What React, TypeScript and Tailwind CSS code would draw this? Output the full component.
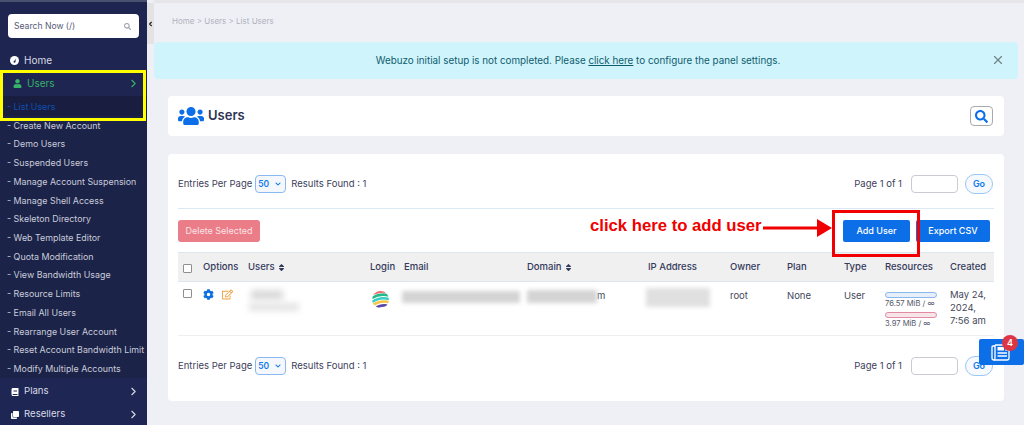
import { FaUsers, FaUser, FaCog, FaRegEdit, FaSearch, FaSort, FaClone, FaBook, FaChevronDown } from "react-icons/fa"
import { LuChevronRight, LuX, LuChevronLeft } from "react-icons/lu"

const subItems = [
  "Create New Account",
  "Demo Users",
  "Suspended Users",
  "Manage Account Suspension",
  "Manage Shell Access",
  "Skeleton Directory",
  "Web Template Editor",
  "Quota Modification",
  "View Bandwidth Usage",
  "Resource Limits",
  "Email All Users",
  "Rearrange User Account",
  "Reset Account Bandwidth Limit",
  "Modify Multiple Accounts",
]

function Sidebar() {
  return (
    <aside className="w-[147px] h-[425px] shrink-0 overflow-hidden bg-[#1e2550] flex flex-col border-t-2 border-[#4a5070]">
      <div className="px-2 pt-3 pb-[10px]">
        <div className="h-6 rounded bg-white flex items-center justify-between pl-[6px] pr-2 text-[8.6px] text-[#555a75]">
          <span>Search Now (/)</span>
          <FaSearch className="text-[7px] text-[#9a9dab]" />
        </div>
      </div>
      <div className="h-[24px] flex items-center gap-[5px] pl-[10px] text-[10px] text-[#d9dbe6] shrink-0">
        <svg width="9" height="9" viewBox="0 0 10 10">
          <circle cx="5" cy="5" r="5" fill="#fff" />
          <path d="M4.4 6.2 L7 2.6 L5.7 6.6Z" fill="#1e2550" />
          <circle cx="5" cy="6.4" r="1" fill="#1e2550" />
        </svg>
        Home
      </div>
      <div className="h-[26px] mt-[-2px] flex items-center justify-between pl-[13px] pr-[7px] text-[10px] text-[#36b368] shrink-0">
        <span className="flex items-center gap-[5px]">
          <FaUser className="text-[9px]" />
          Users
        </span>
        <LuChevronRight className="text-[13px]" />
      </div>
      <ul className="text-[8.9px] text-[#c9ccd9] bg-[#1c2349]">
        <li className="h-[20px] pt-[1px] flex items-center pl-[7px] text-[#0e4fb0] bg-[#191e40]">- List Users</li>
        {subItems.map((item) => (
          <li key={item} className="h-[18.72px] flex items-center pl-[7px] whitespace-nowrap">- {item}</li>
        ))}
      </ul>
      <div className="flex-1 bg-[#1e2654] text-[9.6px] text-[#d9dbe6] pt-[2px]">
        <div className="h-[23px] flex items-center justify-between pl-[11px] pr-[7px]">
          <span className="flex items-center gap-[5px]"><FaBook className="text-[8px] text-white" />Plans</span>
          <LuChevronRight className="text-[13px]" />
        </div>
        <div className="h-[23px] flex items-center justify-between pl-[11px] pr-[7px]">
          <span className="flex items-center gap-[5px]"><FaClone className="text-[8px] text-white" />Resellers</span>
          <LuChevronRight className="text-[13px]" />
        </div>
      </div>
    </aside>
  )
}

function Pager() {
  return (
    <div className="flex items-center justify-between h-[22px] text-[9.5px] text-[#3c405c]">
      <div className="flex items-center">
        <span>Entries Per Page</span>
        <span className="ml-[3px] w-[31px] h-[18px] rounded border border-[#8ab8f0] bg-[#f4f8fd] flex items-center justify-between px-[2px] text-[8.5px] font-semibold text-[#1479e8]">
          50
          <FaChevronDown className="text-[6px] mr-[2px]" />
        </span>
        <span className="ml-[5px]">Results Found : 1</span>
      </div>
      <div className="flex items-center mr-[1px]">
        <span>Page 1 of 1</span>
        <span className="ml-[9px] w-[47px] h-[18px] rounded-sm border border-[#c9cbd2] bg-white" />
        <span className="ml-[7px] w-[28px] h-[20px] rounded-full border border-[#9cc6f5] bg-[#f6faff] flex items-center justify-center text-[9px] font-semibold text-[#1479e8]">Go</span>
      </div>
    </div>
  )
}

function HeaderCell({ label, sort }: { label: string; sort?: boolean }) {
  return (
    <th className="pl-[5px] text-left font-medium whitespace-nowrap">
      <span className="inline-flex items-center gap-[2px]">
        {label}
        {sort && <FaSort className="text-[9px]" />}
      </span>
    </th>
  )
}

function Smudge({ className }: { className: string }) {
  return <div className={`bg-[#d4d4d4] blur-[2px] ${className}`} />
}

function UsersTable() {
  return (
    <table className="w-full table-fixed border-collapse text-[9.5px] text-[#3c405c]">
      <colgroup>
        <col className="w-[20px]" />
        <col className="w-[45px]" />
        <col className="w-[122px]" />
        <col className="w-[34px]" />
        <col className="w-[123px]" />
        <col className="w-[121px]" />
        <col className="w-[82px]" />
        <col className="w-[57px]" />
        <col className="w-[57px]" />
        <col className="w-[41px]" />
        <col className="w-[65px]" />
        <col />
      </colgroup>
      <thead>
        <tr className="h-[29px] bg-[#f0f0f0] border-y border-[#dbe7ef] text-[#343a5c]">
          <th className="pl-[5px]">
            <span className="block w-[9px] h-[9px] mt-[3px] rounded-[1px] border border-[#8f8f8f] bg-white" />
          </th>
          <HeaderCell label="Options" />
          <HeaderCell label="Users" sort />
          <HeaderCell label="Login" />
          <HeaderCell label="Email" />
          <HeaderCell label="Domain" sort />
          <HeaderCell label="IP Address" />
          <HeaderCell label="Owner" />
          <HeaderCell label="Plan" />
          <HeaderCell label="Type" />
          <HeaderCell label="Resources" />
          <HeaderCell label="Created" />
        </tr>
      </thead>
      <tbody>
        <tr className="h-[54px] align-top border-b border-[#eeeff2] text-[#44475a]">
          <td className="pl-[5px] pt-[7px]">
            <span className="block w-[9px] h-[9px] rounded-[1px] border border-[#8f8f8f] bg-white" />
          </td>
          <td className="pl-[5px] pt-[7px]">
            <div className="flex items-center gap-[8px]">
              <FaCog className="text-[11px] text-[#0d6fe0]" />
              <FaRegEdit className="text-[11px] text-[#f0a040]" />
            </div>
          </td>
          <td className="pt-[8px]">
            <Smudge className="w-[32px] h-[10px] ml-[8px] bg-[#dadada] blur-[3px]" />
            <Smudge className="w-[50px] h-[8px] ml-[6px] mt-[3px] bg-[#e4e4e4] blur-[3px]" />
          </td>
          <td className="pl-[7px] pt-[8px]">
            <svg width="17" height="19" viewBox="0 0 17 19" className="block">
              <defs>
                <clipPath id="globe"><circle cx="8.5" cy="9.5" r="8.5" /></clipPath>
              </defs>
              <g clipPath="url(#globe)" fill="none" strokeWidth="2.6">
                <path d="M0 4 Q8 0 17 2" stroke="#ef6a6c" />
                <path d="M0 8 Q8 3 17 5.5" stroke="#24b98b" />
                <path d="M0 12 Q8 6.5 17 9" stroke="#35cfc4" />
                <path d="M0 15.5 Q8 10 17 12" stroke="#f6c544" />
                <path d="M2 19 Q9 14 17 16" stroke="#5b45a8" />
              </g>
            </svg>
          </td>
          <td className="pt-[9px]">
            <Smudge className="w-[118px] h-[12px] ml-[3px]" />
          </td>
          <td className="pl-[5px] pt-[8px]">
            <div className="flex items-start">
              <Smudge className="w-[70px] h-[13px]" />
              <span className="mt-[-1px]">m</span>
            </div>
          </td>
          <td className="pl-[3px] pt-[6px]">
            <Smudge className="w-[64px] h-[19px] bg-[#e0e0e0]" />
          </td>
          <td className="pl-[5px] pt-[7px]">root</td>
          <td className="pl-[5px] pt-[7px]">None</td>
          <td className="pl-[5px] pt-[7px]">User</td>
          <td className="pl-[5px] pt-[10px]">
            <div className="w-[52px] text-[7.6px] text-[#55586a] whitespace-nowrap">
              <div className="h-[6px] rounded-full border border-[#8ab8f0] bg-[#e6eef8]" />
              <div className="mt-[1px] leading-[9px]">76.57 MiB / ∞</div>
              <div className="h-[6px] mt-[4px] rounded-full border border-[#e58aa4] bg-[#f6e6ea]" />
              <div className="mt-[1px] leading-[9px]">3.97 MiB / ∞</div>
            </div>
          </td>
          <td className="pl-[5px] pt-[6px] leading-[13px]">May 24, 2024, 7:56 am</td>
        </tr>
      </tbody>
    </table>
  )
}

export default function App() {
  return (
    <div className="relative w-[1024px] h-[425px] overflow-hidden flex bg-[#eff0f5]" style={{ fontFamily: "Inter, 'Noto Sans', sans-serif" }}>
      <Sidebar />
      <div className="w-[7px] h-[41px] mt-[3px] shrink-0 bg-[#e3e3e3] flex items-center justify-center">
        <LuChevronLeft className="text-[8px] text-[#222]" strokeWidth={4} />
      </div>
      <main className="flex-1 min-w-0 border-t-[3px] border-[#e6e6ea]">
        <div className="h-[35px] flex items-center pl-[18px] text-[8px] text-[#b0b2c0]">Home &gt; Users &gt; List Users</div>
        <div className="relative mt-[4px] mr-[6px] h-[37px] rounded bg-[#cff4fc] flex items-center justify-center text-[9.83px] text-[#0f5d6e] pr-[16px]">
          <span>Webuzo initial setup is not completed. Please <span className="underline">click here</span> to configure the panel settings.</span>
          <LuX className="absolute right-[13px] top-[11px] text-[14px] text-[#6f8287]" />
        </div>
        <div className="ml-[14px] mr-[20px] mt-[17px] h-[40px] rounded bg-white flex items-center justify-between pl-[10px] pr-[11px]">
          <div className="flex items-center gap-[4px] text-[13px] font-semibold text-[#2e3354]">
            <FaUsers className="text-[26px] text-[#0d6fe8]" />
            Users
          </div>
          <span className="w-[23px] h-[20px] rounded border border-[#a9a9ad] flex items-center justify-center">
            <FaSearch className="text-[13px] text-[#0d6fe8]" />
          </span>
        </div>
        <section className="ml-[14px] mr-[20px] mt-[18px] h-[247px] rounded bg-white px-[10px] pt-[19px]">
          <Pager />
          <div className="mt-[13px] h-[44px] border-t border-[#dbe9f5] flex items-center justify-between pr-[4px]">
            <span className="w-[82px] h-[22px] rounded-[3px] bg-[#ea7d88] flex items-center justify-center text-[9px] text-[#fbe3e5]">Delete Selected</span>
            <div className="flex items-center gap-[6px]">
              <span className="w-[67px] h-[22px] rounded-[2px] bg-[#0d6fe8] flex items-center justify-center text-[9px] font-medium text-white">Add User</span>
              <span className="w-[74px] h-[22px] rounded-[2px] bg-[#0d6fe8] flex items-center justify-center text-[9px] font-medium text-white">Export CSV</span>
            </div>
          </div>
          <UsersTable />
          <div className="mt-[19px]">
            <Pager />
          </div>
        </section>
      </main>

      {/* annotations on top of the screenshot */}
      <div className="absolute left-0 top-[70px] w-[146px] h-[51px] border-[3px] border-[#ffff00]" />
      <div className="absolute left-[832px] top-[210px] w-[88px] h-[47px] border-[3px] border-[#f00000]" />
      <div className="absolute left-[590px] top-[213px] text-[16.7px] font-bold text-[#f00000] whitespace-nowrap" style={{ fontFamily: "'Liberation Sans', sans-serif" }}>click here to add user</div>
      <svg className="absolute left-[762px] top-[216px]" width="72" height="24" viewBox="0 0 72 24">
        <rect x="1" y="10.5" width="56" height="3" fill="#f00000" />
        <polygon points="55,3 70,12 55,21" fill="#f00000" />
      </svg>
      <div className="absolute left-[979px] top-[339px] w-[45px] h-[26px] rounded-[2px] bg-[#0d6fe8] flex items-center justify-center">
        <svg width="19" height="17" viewBox="0 0 19 17" fill="none" stroke="#fff" strokeWidth="1.3" className="ml-[-3px]">
          <path d="M4 2 H2 Q1 2 1 3 V14 Q1 16 3 16 H16 Q18 16 18 14 V6" />
          <path d="M4 1 H15 V6 H18" />
          <path d="M4 1 V14 Q4 16 3 16" />
          <rect x="6.5" y="3" width="6.5" height="3.5" fill="#fff" stroke="none" />
          <path d="M6.5 9 H16 M6.5 12 H16" />
        </svg>
      </div>
      <span className="absolute left-[1002px] top-[335px] w-4 h-4 rounded-full bg-[#dc3545] flex items-center justify-center text-[9px] font-semibold text-white">4</span>
    </div>
  )
}
